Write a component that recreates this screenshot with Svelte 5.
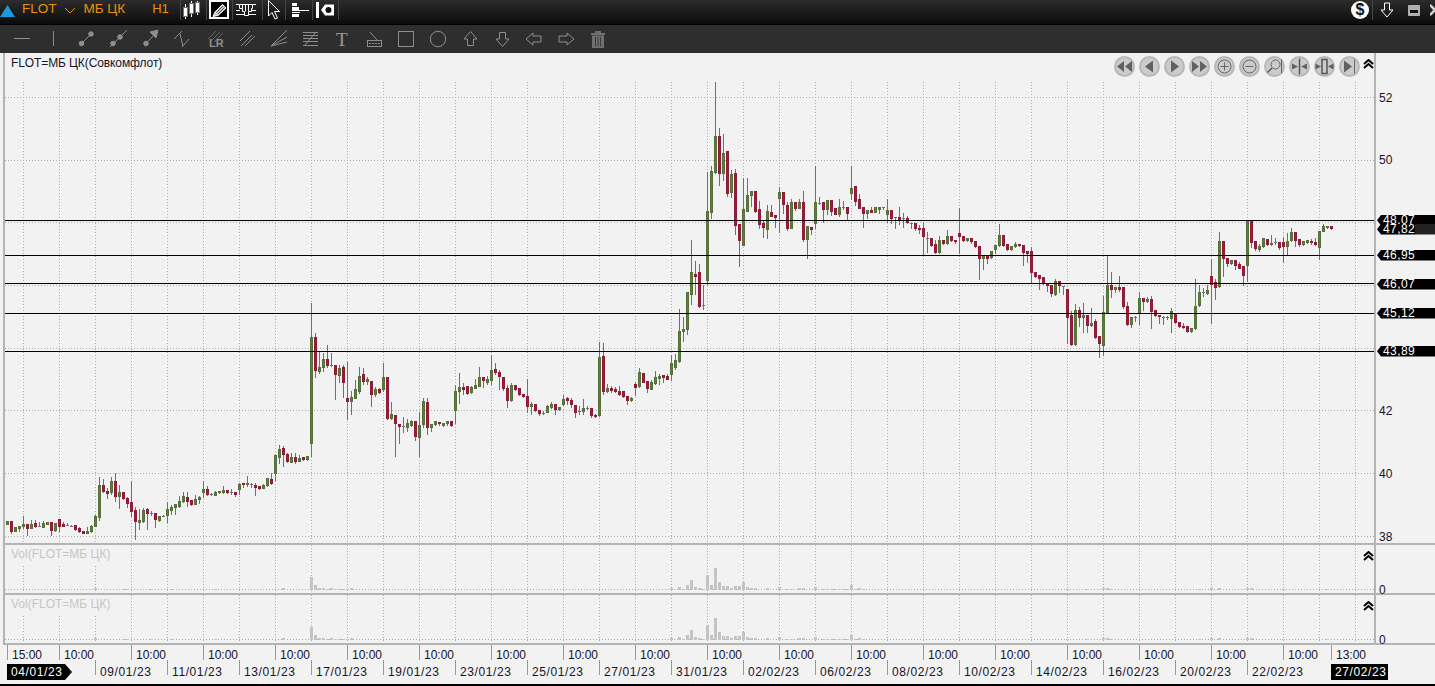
<script>
  const segs = [
    [440, "g243 254 243 255;r243 275 243 282;g262 275 260 276;g259 266 258 276;g252 260 228 268;r253 268 253 288;g252 266 240 268;r250 262 240 264;d258 259 246 262;g250 263 242 264;g247 254 245 256;r247 274 245 288;g250 272 248 275;r238 260 236 276;r253 260 247 261;d255 256 250 258;d257 258 254 260;r256 271 256 272;r264 277 262 278;r274 281 274 282;g274 281 262 282;g258 277 254 279;g229 260 224 261;g135 233 110 242;r135 155 117 158;r153 161 145 176;g123 160 110 165;r123 170 100 186;g156 170 134 206;r156 177 156 180;r174 193 170 204;r186 215 122 232;r210 245 200 299;g240 248 208 270;g210 245 205 250;r208 222 205 270;d219 220 213 228;r220 241 220 264;g228 242 228 245;d228 230 226 230;g208 229 186 250;g201 212 195 225;g193 203 193 224;g183 200 168 204;g168 185 155 190;r171 185 155 200;r181 196 181 198;g178 194 166 196;g171 181 168 192;g148 158 123 173;r147 165 138 168;d162 163 158 168;g156 167 154 168;g154 160 152 161;g151 160 138 161;r150 160 150 161;d156 157 148 164;r156 166 156 170;g133 151 130 164;r129 136 129 144;g129 135 108 142;d132 133 128 143;r135 143 130 167;r138 148 138 150;g135 146 132 147;g114 139 114 140;r118 133 100 136;g45 102 45 124;g27 55 15 72;r24 46 18 80;r43 67 40 70;g51 68 40 68;r51 65 40 72;g55 65 45 65"],
    [300, "r472 480 470 482;g469 481 469 482;g111 433 8 472;r111 213 98 233;g201 215 155 221;g177 205 160 215;r177 199 135 205;d196 197 160 200;r196 226 196 300;g204 227 196 248;r201 250 195 293;r294 307 185 360;g291 307 273 344;g267 296 240 298;g229 277 201 283;r222 245 203 255;g237 245 230 254;r243 284 243 320;g267 284 260 290;r267 278 265 283;g231 269 190 275;r231 356 231 360;g342 356 305 360;r345 373 345 470;r372 382 372 433;d379 380 350 398;g369 383 358 395;g363 377 360 380;r363 412 363 422;g375 413 335 472;g303 374 295 383;r306 385 295 405;g372 385 372 395;g364 376 364 378;r366 373 366 378;g369 377 369 380;g363 373 363 378;r363 379 363 381;g273 334 255 373;g261 277 220 312;r261 269 248 286;r258 281 258 285;g261 280 258 282;g255 266 238 268;g231 260 200 262;r231 244 231 265;g237 248 228 255;g210 242 165 256;r207 220 190 225;r216 232 210 270;r231 268 231 272;r264 304 255 324;g255 304 248 306;r255 271 255 273;r264 286 264 288;r283 292 283 294;r288 322 237 340;g312 322 305 345;r312 334 312 336;r330 343 330 348;d340 341 332 345;g318 338 316 340;g312 323 305 326;r312 331 312 345;g321 331 321 333;g297 316 285 318;r294 304 292 315;r300 316 295 325;r315 338 315 353;d333 334 318 345;g324 337 297 345;d324 325 318 330;r324 348 324 353;r345 352 342 353"],
    [80, "g831 1009 785 1010;r828 935 790 945;g924 935 912 940;r924 932 918 938;r927 935 920 940;r933 945 918 948;r933 950 933 955;r948 962 948 975;g954 963 950 965;r912 923 905 948;g876 920 865 925;r879 908 879 910;r903 928 903 938;g906 929 900 930;g891 912 873 915;g888 897 882 915;r885 893 885 910;r888 899 882 900;g849 884 825 902;g840 864 822 870;g753 846 687 850;g747 756 712 786;g636 751 636 765;g576 644 480 675;r582 590 543 645;r576 681 552 684;d676 677 615 690;g393 602 277 615;g273 398 258 417;g168 279 6 282;r168 282 144 318;g219 282 162 303;r213 342 213 351;g282 339 270 354;r279 438 267 465;r432 483 432 561;g387 498 294 498;g345 396 294 396;g333 348 333 381;r333 396 333 399;r387 435 363 447;r429 444 420 474;g393 450 375 477;r396 411 375 411;r405 414 405 444;g336 357 322 459;r336 375 336 402;r375 447 366 453;g366 447 357 447;r366 387 366 393;g366 387 357 387;r366 480 333 486;g438 480 438 537;r441 450 441 465;g366 432 258 447;d368 369 351 375;r366 390 366 429;g360 390 360 405;r360 396 360 408;r384 405 384 405;g381 405 357 411;d381 382 363 390;r381 402 381 420;g324 342 258 360;r318 366 318 378;r357 387 342 387;r381 402 381 444;g390 402 390 417;r390 398 381 399;g381 398 381 400;g381 390 381 402;d381 382 381 390;g390 405 357 430;r390 417 390 432;d412 413 412 447;r411 420 381 435;d415 416 399 444"],
    [190, "r84 100 78 102;d100 101 100 118;r100 118 100 122;r114 121 105 132;r115 142 97 195;d145 146 127 188;r145 168 145 171;r163 190 150 192;g151 190 139 192;r151 163 151 165;g139 163 121 165;r139 154 139 157;r151 157 151 163;r130 142 55 192;r139 154 139 157;g145 154 145 156;r145 157 145 163;r154 172 154 174;r169 207 169 270;g196 208 196 240;r197 208 197 222;g184 205 184 208;g166 181 166 192;g136 169 102 171;r136 169 136 172;r163 181 163 183;g169 181 169 183;g163 172 157 175;r163 169 163 172;r166 190 166 228;r184 192 184 219;r184 250 171 280;r247 262 247 265;r256 268 256 300;r262 283 262 286;r280 289 280 306;r286 313 286 321;g274 314 268 318;r274 289 274 309;d289 290 289 315;r298 385 298 462;r376 466 364 469;g361 466 343 468;r361 385 352 412;g376 385 340 430;r376 409 376 430;g400 409 354 412;r394 445 388 448;r439 463 439 503;g367 469 318 499;g286 370 196 373;r286 301 246 324;g292 299 292 309;r292 299 258 306;r292 352 292 356;r349 406 337 408;g382 406 382 413;d381 382 378 396;g325 373 307 405;r325 337 325 362;g328 337 322 340;r328 367 319 417;r361 379 361 380;r376 382 376 402;d381 382 378 405;d381 382 378 390;g364 388 354 429;r373 400 370 402;r397 412 397 414;r408 414 400 416;r408 427 408 428;g415 427 415 428;g349 418 267 420;g307 349 286 352;d307 308 295 320;g301 313 286 315;r259 286 208 402;r277 295 268 330;g153 292 127 295"],
    [200, "r123 178 123 230;r175 191 175 200;g181 191 181 195;r181 199 181 210;r193 206 185 208;r199 229 199 257;g63 199 63 245;r63 130 63 145;r124 148 124 152;g138 149 133 155;g115 142 115 145;r118 136 118 138;g130 136 105 138;d127 128 115 135;r127 145 127 150;r127 142 112 190;g124 142 99 165;g97 124 85 126;r97 124 97 140;r118 136 118 142;g124 136 124 138;g121 130 121 132;r124 130 118 136;r127 136 115 138;g93 145 93 180;g79 96 73 97;g79 85 79 86;r79 88 79 89"]
  ];
  const candles = segs.flatMap(([off, s]) => s.split(";").map((c) => {
    const [bt, bb, wt, wb] = c.slice(1).split(" ").map((n) => Math.round(off + Number(n) / 3));
    return { t: c[0], bt, bb, wt, wb };
  })).map((c, i) => ({ ...c, x: 6 + 4 * i }));

  const vLines = Array.from({ length: 38 }, (_, k) => 23 + 36 * k).filter((x) => x < 1374);
  const hLines = [97, 160, 222, 285, 348, 410, 473, 536];
  const levels = [220, 255, 283, 313, 351];
  const priceAxis = [["52", 97], ["50", 159], ["42", 410], ["40", 473], ["38", 536]];
  const tags = [["48,07", 215], ["47,82", 224, true], ["46,95", 250], ["46,07", 279], ["45,12", 308], ["43,89", 346]];

  const volH = { 76: 13, 77: 5, 78: 2, 79: 2, 80: 1, 81: 2, 82: 1, 83: 1, 84: 1, 85: 1, 86: 2, 22: 2, 29: 1, 30: 1, 36: 1, 41: 1, 52: 1, 69: 2, 166: 2, 168: 3, 169: 1, 170: 5, 171: 10, 172: 3, 173: 2, 174: 1, 175: 15, 176: 5, 177: 22, 178: 8, 179: 4, 180: 4, 181: 2, 182: 4, 183: 4, 184: 8, 185: 3, 186: 2, 187: 2, 190: 2, 193: 3, 195: 1, 196: 1, 198: 2, 199: 2, 202: 3, 204: 1, 205: 1, 206: 1, 207: 1, 208: 1, 209: 1, 210: 1, 211: 5, 212: 1, 213: 2, 214: 1, 265: 1, 270: 1, 274: 2, 275: 2, 276: 1, 298: 1, 301: 2, 303: 2, 310: 2, 311: 2, 319: 1, 330: 1 };
  const volBars = Object.entries(volH).map(([i, h]) => ({ x: 6 + 4 * Number(i), h }));

  const times = ["15:00", ...Array(18).fill("10:00"), "13:00"];
  const dates = ["09/01/23","11/01/23","13/01/23","17/01/23","19/01/23","23/01/23","25/01/23","27/01/23","31/01/23","02/02/23","06/02/23","08/02/23","10/02/23","14/02/23","16/02/23","20/02/23","22/02/23"];
  const panes = [{ y: 545, base: 589 }, { y: 595, base: 639 }];
</script>

{#snippet chev()}
  <svg class="chev" width="11" height="10" viewBox="0 0 11 10"><path d="M1 5 5.5 1 10 5M1 9 5.5 5 10 9" /></svg>
{/snippet}

<div class="app">
  <header class="topbar">
    <svg class="tri" width="15" height="12" viewBox="0 0 15 12"><path d="M7.500 0 15 12H0z" /></svg>
    <span class="sym">FLOT</span>
    <svg class="arrow" width="12" height="7" viewBox="0 0 12 7"><path d="M1 1 6 6 11 1" /></svg>
    <span class="sym mb">МБ ЦК</span>
    <span class="sym h1">Н1</span>
    <div class="tools">
      <span class="tool w26">
        <svg class="shl" width="18" height="18" viewBox="0 0 18 18">
          <path class="tline" d="M2.500 3V18M8.500 0V16M14.500 0V14" />
          <rect class="tcandle" x="0.500" y="6.500" width="4" height="9" /><rect class="tcandle" x="6.500" y="2.500" width="4" height="10" /><rect class="tcandle" x="12.500" y="1.500" width="4" height="10" />
        </svg>
      </span>
      <span class="tool w26">
        <span class="active">
          <svg width="15" height="14" viewBox="0 0 15 14">
            <path class="tpencil" d="M3 9 10.500 1.500 14 5 6 12.500 1 13.500z" />
            <path class="tdark" d="M4.500 9.500 11 3M6 11 12.500 4.500" />
          </svg>
        </span>
      </span>
      <span class="tool w30">
        <svg class="shl" width="20" height="14" viewBox="0 0 20 14">
          <path class="tline" d="M0 1.500H3M17 1.500H20M0 7.500H4M16 7.500H20M0 11.500H8M12 11.500H20" />
          <path class="tline" d="M3.500 1.500H16.500V5.500H15.500V8.500H12.500V12.500H8.500V8.500H6.500V5.500H3.500zM6.500 1.500V5.500M9.500 1.500V8.500M12.500 1.500V8.500" />
        </svg>
      </span>
      <span class="tool w23">
        <svg width="14" height="20" viewBox="0 0 14 20"><path class="tline" d="M1.500 .5V16L5 12.500 8 19 10.500 18 7.500 11.500H12.500z" /></svg>
      </span>
      <span class="tool w27">
        <svg class="shr" width="17" height="16" viewBox="0 0 17 16">
          <path class="tfill" d="M0 1H5V4H0zM0 5H7V9H0zM0 10H8V11H0zM0 12H7V15H0z" />
          <path class="tline" d="M7 8.500H17" />
        </svg>
      </span>
      <span class="tool w27 last">
        <svg width="18" height="16" viewBox="0 0 18 16">
          <path class="tfill" d="M0 0H3V16H0zM5 8 9 2.500H18V13.500H9z" />
          <circle class="thole" cx="12.500" cy="8" r="3" />
        </svg>
      </span>
    </div>
    <span class="right">
      <span class="dollar">$</span>
      <span class="rs"></span>
      <svg class="dn" width="14" height="16" viewBox="0 0 14 16"><path class="tline" d="M4.500 1H9.500V8H13L7 15 1 8H4.500z" /></svg>
      <span class="win"></span>
      <svg class="close" width="5" height="12" viewBox="0 0 5 12"><path d="M0 1 5 6M5 6 0 11M5 6 10 1M5 6 10 11" /></svg>
    </span>
  </header>

  <nav class="toolbar">
    <svg width="610" height="28" viewBox="0 25 610 28">
      <g class="gi">
        <path d="M14 38.500H30M53.500 31V46" />
        <circle cx="81.500" cy="43.500" r="2.300" class="gf" /><circle cx="91" cy="34" r="2.300" class="gf" /><path d="M81.500 43.500 91 34" />
        <circle cx="113" cy="43.500" r="2.300" class="gf" /><circle cx="120" cy="37" r="2.300" class="gf" /><path d="M110 47 127 30" />
        <circle cx="146" cy="43.500" r="2.300" class="gf" /><path d="M146 43.500 155 34" /><path class="gf" d="M150 32 158 30 156 38z" />
        <path d="M174 39 182 31M180 34 183 46M182 47 189 39" />
        <path class="faint" d="M208 39 216 31M211 41 220 32M214 42 223 33" />
        <text x="209" y="47" class="lr">LR</text>
        <path d="M240 41 250 31M245 46 255 36M241 46 252 35" />
        <path d="M271 46 287 30M271 46 287 37M271 46 287 42" />
        <path d="M303 32.500H318M303 35.500H318M303 38.500H318M303 41.500H318M303 45.500H318M305 45 316 32" />
        <text x="336" y="46" class="tt">T</text>
        <path d="M370 32 377 40" /><rect x="367.500" y="40.500" width="14" height="6" />
        <path class="thin" d="M369 43.500H380" />
        <rect x="398.500" y="31.500" width="15" height="15" />
        <circle cx="438" cy="39" r="7.700" />
        <path d="M470.500 31.500 477 39H473.500V45.500H467.500V39H464z" />
        <path d="M499.500 32.500H505.500V39H509L502.500 46.500 496 39H499.500z" />
        <path d="M526 39 533 33V36H541V42H533V45z" />
        <path d="M574 39 567 33V36H559V42H567V45z" />
        <path class="trash" d="M591 33H605V35H591zM595 31H601V33H595zM592 35.500H604V48H592z" />
        <path class="tslot" d="M595.500 37V46.500M598 37V46.500M600.500 37V46.500" />
      </g>
    </svg>
  </nav>

  <main class="charts">
    <section class="pane main">
      <div class="plot">
        <svg class="canvas" width="1369" height="490" viewBox="5 53 1369 490" shape-rendering="crispEdges">
          {#each hLines as y}<line class="dot" x1="5" x2="1374" y1={y + 0.5} y2={y + 0.5} />{/each}
          {#each vLines as x}<line class="dot" x1={x + 0.5} x2={x + 0.5} y1="82" y2="543" />{/each}
          {#each candles as c}
            <rect class="wick" x={c.x + 1} y={c.wt} width="1" height={Math.max(1, c.wb - c.wt)} />
            {#if c.t === "d"}
              <rect class="wick" x={c.x} y={c.bt} width="3" height="1" />
            {:else}
              <rect class={c.t === "g" ? "bg" : "br"} x={c.x} y={c.bt} width="3" height={Math.max(2, c.bb - c.bt)} />
              <rect class={c.t === "g" ? "ig" : "ir"} x={c.x + 1} y={c.bt + 1} width="1" height={Math.max(1, c.bb - c.bt - 2)} />
            {/if}
          {/each}
          {#each levels as y}<rect class="level" x="5" {y} width="1369" height="1" />{/each}
        </svg>
        <div class="title">FLOT=МБ ЦК(Совкомфлот)</div>
        <div class="navs">
          <button aria-label="first"><svg viewBox="0 0 21 21"><path class="nf" d="M10 5V16L3 10.500zM18 5V16L11 10.500z" /></svg></button>
          <button aria-label="prev"><svg viewBox="0 0 21 21"><path class="nf" d="M14 4.500V16.500L6 10.500z" /></svg></button>
          <button aria-label="next"><svg viewBox="0 0 21 21"><path class="nf" d="M7 4.500V16.500L15 10.500z" /></svg></button>
          <button aria-label="last"><svg viewBox="0 0 21 21"><path class="nf" d="M3 5V16L10 10.500zM11 5V16L18 10.500z" /></svg></button>
          <button aria-label="in"><svg viewBox="0 0 21 21"><circle class="ns" cx="10.500" cy="10.500" r="6.500" /><path class="ns" d="M6.500 10.500H14.500M10.500 6.500V14.500" /></svg></button>
          <button aria-label="out"><svg viewBox="0 0 21 21"><circle class="ns" cx="10.500" cy="10.500" r="6.500" /><path class="ns" d="M6.500 10.500H14.500" /></svg></button>
          <button aria-label="zoom"><svg viewBox="0 0 21 21"><circle class="ns" cx="11.500" cy="8.500" r="4.500" /><path class="ns2" d="M8 12 3.500 16.500" /><path class="ns" d="M17.500 3.500V17" /></svg></button>
          <button aria-label="fit"><svg viewBox="0 0 21 21"><path class="ns2" d="M10.500 2.500V18.500" /><path class="nf" d="M3 7.500 9 10.500 3 13.500zM18 7.500 12 10.500 18 13.500z" /></svg></button>
          <button aria-label="box"><svg viewBox="0 0 21 21"><rect class="ns2" x="8" y="3.500" width="5" height="14" /><path class="nf" d="M1.500 7.500 7 10.500 1.500 13.500zM19.500 7.500 14 10.500 19.500 13.500z" /></svg></button>
          <button aria-label="end"><svg viewBox="0 0 21 21"><path class="nf" d="M5 4.500V16.500L13 10.500z" /><path class="ns" d="M15.500 3.500V17.500" /></svg></button>
        </div>
        <span class="up">{@render chev()}</span>
      </div>
      <div class="axis">
        {#each priceAxis as [t, y]}<span class="tick" style="top:{y - 53 - 6}px">{t}</span>{/each}
        {#each tags as [t, y, alt]}<span class="tag" class:alt style="top:{y - 53}px">{t}</span>{/each}
      </div>
    </section>

    {#each panes as p}
      <section class="pane vol">
        <div class="plot">
          <svg class="canvas" width="1369" height="48" viewBox="5 {p.y} 1369 48" shape-rendering="crispEdges">
            <line class="dot" x1="5" x2="1374" y1={p.base + 0.5} y2={p.base + 0.5} />
            {#each vLines as x}<line class="dot" x1={x + 0.5} x2={x + 0.5} y1={p.y} y2={p.y + 48} />{/each}
            {#each volBars as b}<rect class="vbar" x={b.x} y={p.base + 1 - b.h} width="3" height={b.h} />{/each}
          </svg>
          <div class="vlabel">Vol(FLOT=МБ ЦК)</div>
          <span class="up v">{@render chev()}</span>
        </div>
        <div class="axis"><span class="tick" style="top:{p.base - p.y - 6}px">0</span></div>
      </section>
    {/each}
  </main>

  <footer class="time">
    <div class="row r1">
      {#each times as t, i}<span class="cell" class:first={i === 0} class:pen={i === 18}>{t}</span>{/each}
    </div>
    <div class="row r2">
      <span class="slot"><span class="pill arrowpill">04/01/23</span></span>
      {#each dates as d, i}<span class="cell" class:pen2={i === 16}>{d}</span>{/each}
      <span class="pill">27/02/23</span>
    </div>
  </footer>
</div>

<style>
  :global(body) { margin: 0; background: #f2f2f2; }
  .app { width: 1435px; height: 686px; display: flex; flex-direction: column; overflow: hidden; font: 12px/14px "Liberation Sans", Arial, sans-serif; color: #14142a; background: #f2f2f2; }

  .topbar { height: 24px; box-sizing: content-box; flex: none; display: flex; align-items: flex-start; background: linear-gradient(#2c2c2c, #0c0c0c); border-bottom: 1px solid #000; }
  .topbar > svg, .topbar > .sym { margin-top: 2px; }
  .tri { margin-top: 5px !important; fill: #1c9ad8; flex: none; }
  .sym { color: #e8920e; font-size: 13.5px; margin-left: 7px; }
  .arrow { margin-left: 7px; margin-top: 7px !important; fill: none; stroke: #e8920e; flex: none; }
  .mb { margin-left: 8px; }
  .h1 { margin-left: 27px; font-size: 13px; }
  .tools { position: relative; display: flex; margin-left: 11px; }
  .tool { height: 20px; box-sizing: border-box; border-left: 1px solid #444; display: flex; align-items: center; justify-content: center; flex: none; }
  .last { border-right: 1px solid #444; }
  .w23 { width: 23px; }
  .w26 { width: 26px; }
  .w27 { width: 27px; }
  .w30 { width: 30px; }
  .shl { margin-right: 3px; }
  .shr { margin-left: 3px; }
  .tline { fill: none; stroke: #fff; }
  .tcandle { fill: #fff; stroke: #777; stroke-width: 1; }
  .tfill { fill: #fff; }
  .tpencil { fill: #c8c8c8; stroke: #fff; stroke-width: 1; }
  .tdark { stroke: #555; fill: none; }
  .thole { fill: #111; }
  .active { width: 20px; height: 19px; box-sizing: border-box; border: 2px solid #fff; background: #000; display: flex; align-items: center; justify-content: center; flex: none; margin-top: -1px; }
  .right { margin-left: auto; display: flex; align-items: center; height: 20px; flex: none; width: 84px; }
  .dollar { width: 18px; height: 18px; border-radius: 50%; background: #fff; color: #111; font: bold 16px/18px "Liberation Sans", sans-serif; text-align: center; flex: none; }
  .rs { width: 1px; height: 20px; background: #444; margin-left: 3px; flex: none; }
  .dn { margin-left: 7px; flex: none; }
  .win { width: 12px; height: 11px; background: #b0b0b0; border-radius: 1px; margin-left: 14px; flex: none; }
  .win::after { content: ""; display: block; height: 3px; margin: 5px 2px 0; background: #111; }
  .close { margin-left: 10px; fill: none; stroke: #d0d0d0; stroke-width: 2.500; flex: none; }

  .toolbar { height: 28px; flex: none; background: #2e2e2e; }
  .toolbar svg { display: block; }
  .gi { fill: none; stroke: #8e8e8e; stroke-width: 1; }
  .gf { fill: #8e8e8e; }
  .faint { stroke: #666; }
  .lr { fill: #8e8e8e; stroke: none; font: bold 11px "Liberation Sans", sans-serif; }
  .tt { fill: #999; stroke: none; font: 19px "Liberation Serif", serif; }
  .thin { stroke-dasharray: 2 1; }
  .trash { fill: #707070; stroke: none; }
  .tslot { stroke: #3a3a3a; }

  .charts { flex: none; margin-left: 3px; border-left: 2px solid #b4b4b4; }
  .pane { display: flex; border-bottom: 2px solid #b4b4b4; }
  .main { height: 490px; }
  .vol { height: 48px; }
  .plot { position: relative; width: 1369px; border-right: 2px solid #b4b4b4; flex: none; }
  .canvas { display: block; }
  .axis { position: relative; flex: 1; }
  .tick { position: absolute; left: 3px; }
  .dot { stroke: #adadad; stroke-dasharray: 1 2; }
  .wick { fill: #6f6f6f; }
  .bg { fill: #56703a; }
  .ig { fill: #4f8a12; }
  .br { fill: #8e1c38; }
  .ir { fill: #d6002e; }
  .level { fill: #000; }
  .vbar { fill: #c4c4c4; }

  .title { position: absolute; left: 6px; top: 3px; letter-spacing: -0.1px; }
  .navs { position: absolute; left: 1109px; top: 3px; display: flex; gap: 4px; }
  .navs button { width: 21px; height: 21px; padding: 0; border: 2px solid #b8b8b8; border-radius: 50%; background: #cbcbcb; display: block; box-sizing: border-box; }
  .navs svg { display: block; width: 21px; height: 21px; margin: -2px; }
  .nf { fill: #616161; }
  .ns { fill: none; stroke: #666; }
  .ns2 { fill: none; stroke: #555; stroke-width: 1.500; }
  .up { position: absolute; left: 1358px; top: 6px; line-height: 0; }
  .chev { fill: none; stroke: #000; stroke-width: 2; }

  .tag { position: absolute; left: 1px; right: 0; height: 10.500px; line-height: 11px; padding-left: 6px; letter-spacing: 0.4px; color: #fff; background: #000; clip-path: polygon(0 50%, 4px 0, 100% 0, 100% 100%, 4px 100%); }
  .alt { background: linear-gradient(90deg, #000 38px, #222 38px); }

  .vlabel { position: absolute; left: 0; top: 0; width: 107px; height: 20px; padding: 2px 0 0 6px; box-sizing: border-box; color: #c6c6c6; background: #f2f2f2; }

  .time { flex: none; height: 39px; border-bottom: 2px solid #000; }
  .row { display: flex; height: 15px; }
  .r1 { padding-left: 7px; }
  .r2 { padding-left: 7px; letter-spacing: 0.6px; }
  .cell { flex: none; box-sizing: border-box; width: 72px; height: 15px; border-left: 1px solid #999; padding: 3px 0 0 4px; white-space: nowrap; }
  .first { width: 52px; }
  .pen { width: 48px; }
  .r2 .cell { padding-top: 5px; }
  .pen2 { width: 84px !important; }
  .slot { width: 88px; flex: none; }
  .pill { display: block; flex: none; width: 57px; height: 16px; margin-top: 4px; background: #000; color: #fff; line-height: 16px; padding-left: 4px; box-sizing: border-box; white-space: nowrap; }
  .arrowpill { width: 65px; clip-path: polygon(0 0, 58px 0, 65px 50%, 58px 100%, 0 100%); }
</style>
